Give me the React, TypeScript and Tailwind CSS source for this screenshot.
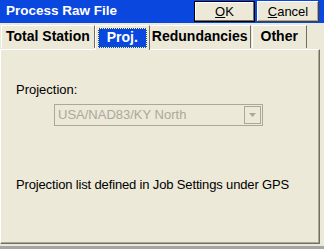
import React from "react";

const font = { fontFamily: "'Liberation Sans', Arial, sans-serif" };

export default function App() {
  return (
    <div
      className="w-[324px] h-[249px] bg-[#ECE9D8] flex flex-col overflow-hidden text-[13px] text-black whitespace-nowrap"
      style={font}
    >
      {/* title bar */}
      <div className="h-[23px] bg-[#0A47DE] flex items-start shrink-0">
        <div className="pl-[6px] pt-[3px] text-white font-bold text-[13.5px] leading-[16px] flex-1">Process Raw File</div>
        <div className="flex gap-[2px] pt-px pr-[5px]">
          <button className="w-[61px] h-[21px] bg-[#ECE9D8] border border-black shadow-[inset_-1px_-1px_0_#716F64,inset_1px_1px_0_#fff] leading-[18px] text-center">
            <span className="underline">O</span>K
          </button>
          <button className="w-[62px] h-[21px] bg-[#ECE9D8] shadow-[inset_-1px_-1px_0_#404040,inset_1px_1px_0_#fff,inset_-2px_-2px_0_#ACA899] leading-[20px] text-center">
            <span className="underline">C</span>ancel
          </button>
        </div>
      </div>

      {/* tabs */}
      <div className="h-[26px] flex items-end pl-[1px] shrink-0 font-bold text-[14px]">
        <div className="h-[23px] px-[4px] border-l border-t border-white border-r border-r-[#716F64] leading-[21px] mb-px">
          Total Station
        </div>
        <div className="h-[25px] px-[2px] pt-[2px] mb-[-1px] relative z-10 bg-[#ECE9D8] border-l border-t border-white border-r border-r-[#716F64]">
          <div className="h-[20px] px-[9px] bg-[#0A47DE] text-white leading-[18px] outline outline-1 outline-dotted outline-[#ffff80] -outline-offset-1">
            Proj.
          </div>
        </div>
        <div className="h-[23px] px-[2px] border-t border-white border-r border-r-[#716F64] leading-[21px] mb-px">
          Redundancies
        </div>
        <div className="h-[23px] px-[8px] border-l border-t border-white border-r border-r-[#716F64] leading-[21px] mb-px ml-px">
          Other
        </div>
      </div>

      {/* panel */}
      <div className="flex-1 flex flex-col mr-[4px] border-t border-l border-white border-r border-r-[#716F64] border-b border-b-[#716F64] shadow-[inset_-1px_-1px_0_#ACA899] pl-[15px] pt-[32px]">
        <div className="leading-[16px]">Projection:</div>
        <div className="mt-[6px] ml-[38px] w-[209px] h-[22px] border border-[#ACA899] flex items-center bg-[#ECE9D8]">
          <div className="flex-1 pl-[3px] text-[#ACA899] leading-[16px]">USA/NAD83/KY North</div>
          <div className="w-[17px] h-[18px] mr-px border border-[#ACA899] flex items-center justify-center bg-[#ECE9D8]">
            <svg width="7" height="4" viewBox="0 0 7 4">
              <path d="M0 0h7L3.5 4z" fill="#ACA899" />
            </svg>
          </div>
        </div>
        <div className="mt-[51px] leading-[16px] tracking-[-0.15px]">Projection list defined in Job Settings under GPS</div>
      </div>
      <div className="h-[2px] shrink-0" />
      <div className="h-[3px] bg-[#A5A5A5] shrink-0" />
    </div>
  );
}
